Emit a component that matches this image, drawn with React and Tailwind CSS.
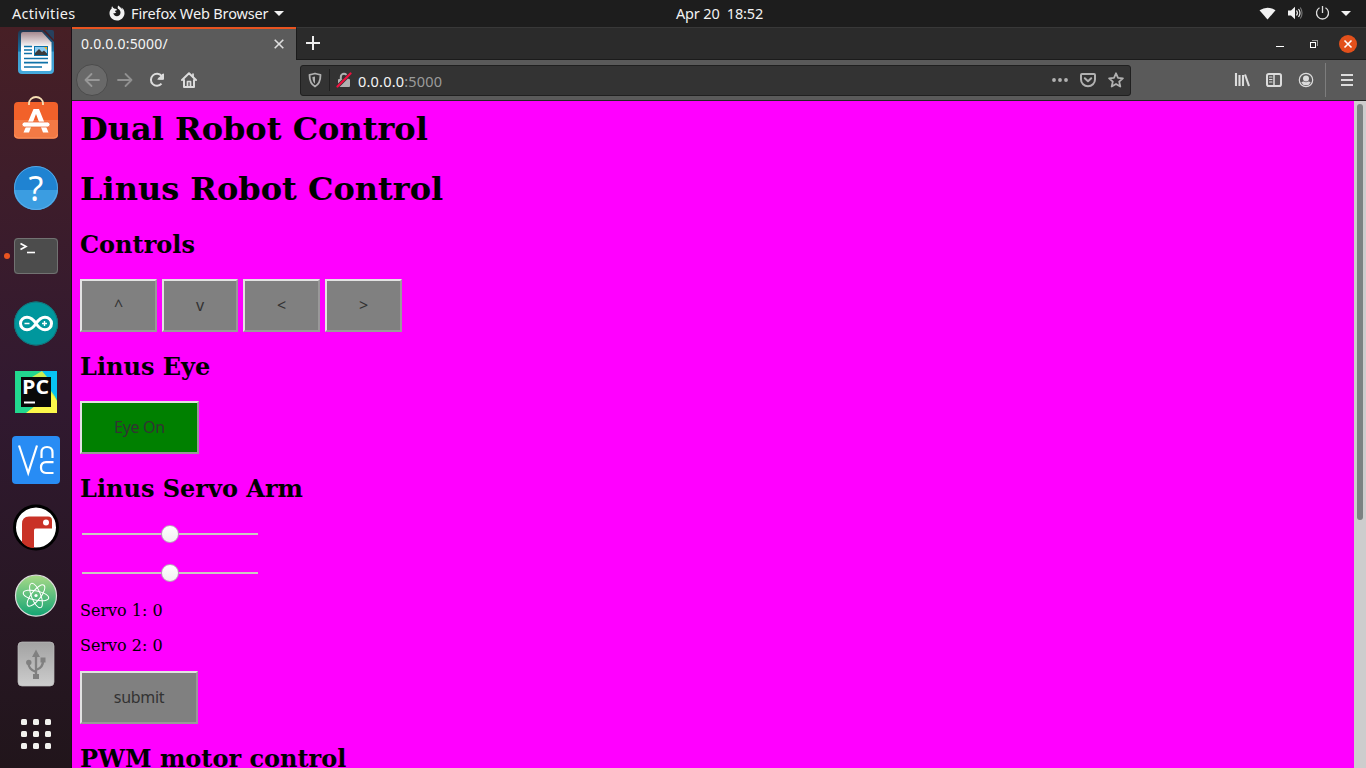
import React from "react";

const ui = "font-['Noto_Sans',sans-serif]";

function DockCell({ children, running }) {
  return (
    <div className="flex h-[68px] w-full shrink-0 items-center">
      <div className="flex w-3 justify-center pr-px pl-0.5">
        {running && <span className="size-1.5 rounded-full bg-[#e95420]" />}
      </div>
      <svg width="48" height="48" viewBox="0 0 48 48" className="block shrink-0">
        {children}
      </svg>
    </div>
  );
}

function Dock() {
  return (
    <nav className="flex w-[72px] shrink-0 flex-col overflow-hidden border-r border-[#1b0f17] bg-linear-to-b from-[#471f25] via-[#311930] via-50% to-[#21151b]">
      <div className="-mt-[9px] shrink-0">
        <DockCell>
          <defs>
            <linearGradient id="paper" x1="0" y1="0" x2="0" y2="1">
              <stop offset="0" stopColor="#a58a90" />
              <stop offset=".4" stopColor="#fff" />
            </linearGradient>
            <linearGradient id="frame" x1="0" y1="0" x2="0" y2="1">
              <stop offset="0" stopColor="#23354c" />
              <stop offset=".48" stopColor="#1672a6" />
              <stop offset=".5" stopColor="#3d9bcc" />
              <stop offset="1" stopColor="#45aadd" />
            </linearGradient>
          </defs>
          <path d="M10 2h20.5L42 14v28a4 4 0 0 1-4 4H10a4 4 0 0 1-4-4V6a4 4 0 0 1 4-4z" fill="url(#frame)" />
          <path d="M11 4h19L39.500 14.500V41a2 2 0 0 1-2 2H11a2 2 0 0 1-2-2V6a2 2 0 0 1 2-2z" fill="url(#paper)" />
          <path d="M33 2h7a2 2 0 0 1 2 2v8z" fill="#27415e" />
          <path d="M12 18.500h8M12 22h8M12 25.500h8M12 30.500h24M12 34.700h24M12 39h18" stroke="#0e72a8" strokeWidth="1.700" />
          <path d="M22 18h14v10H22z" fill="#0e72a8" />
          <path d="M23 19h12v8H23z" fill="#8ccbf0" />
          <path d="M32 19h3v3z" fill="#f5b21b" />
          <path d="M23 27v-2l4-4 3 3 2-1.500 3 3V27z" fill="#3b3b3b" />
        </DockCell>
      </div>
      <DockCell>
        <rect x="2" y="6" width="44" height="36.500" rx="4" fill="#f2612a" />
        <path d="M2 24h44v14.500a4 4 0 0 1-4 4H6a4 4 0 0 1-4-4z" fill="#f37a45" />
        <path d="M2.500 38.500a4 4 0 0 0 4 3.500h35a4 4 0 0 0 4-3.500" fill="none" stroke="#f8925f" />
        <path d="M17 9V7.500a7 6.500 0 0 1 14 0V9" fill="none" stroke="#f7dfb4" strokeWidth="1.800" />
        <path d="M21.500 13h5.500L36.500 36.500h-5.500L24 18 17 36.500h-5.500z" fill="#fff" />
        <rect x="10" y="26" width="28" height="5" rx="2.500" fill="#fff" stroke="#ee6a37" strokeWidth=".8" />
      </DockCell>
      <DockCell>
        <circle cx="24" cy="24" r="22" fill="#1f83d2" />
        <path d="M2 26a22 20 0 0 0 44 0z" fill="#3b9de1" />
        <circle cx="24" cy="24" r="21.500" fill="none" stroke="#63b0e8" strokeWidth=".8" />
        <text x="24" y="36.700" textAnchor="middle" fontFamily="Noto Sans" fontSize="34" fill="#fff">?</text>
      </DockCell>
      <DockCell running>
        <rect x="2" y="6" width="44" height="36" rx="3.500" fill="#4c4c4c" />
        <rect x="2.500" y="6.500" width="43" height="35" rx="3.500" fill="none" stroke="#727272" />
        <path d="M8.500 11.500l5.500 3-5.500 3" fill="none" stroke="#fff" strokeWidth="1.700" />
        <path d="M15 20.500h8" stroke="#fff" strokeWidth="1.600" />
      </DockCell>
      <DockCell>
        <circle cx="24" cy="23.500" r="22" fill="#00979d" />
        <circle cx="24" cy="23.500" r="21.500" fill="none" stroke="#137278" />
        <path d="M24 23.500C20.500 18 18 17.200 15 17.200a6.500 6.300 0 0 0 0 12.600C18 29.800 20.500 29 24 23.500S30 17.200 33 17.200a6.500 6.300 0 0 1 0 12.600C30 29.800 27.500 29 24 23.500z" fill="none" stroke="#fff" strokeWidth="3" />
        <path d="M12.500 23.500h5M30 23.500h5M32.500 21v5" stroke="#fff" strokeWidth="1.400" />
      </DockCell>
      <DockCell>
        <path d="M3 3h42v42H3z" fill="#22d88f" />
        <path d="M28 3h17v26L28 14z" fill="#07c3f2" />
        <path d="M20 9L30 3l5 6 10 24v12H20z" fill="#c8ee55" />
        <path d="M14 45l25-20 6 8v12z" fill="#fcf84a" />
        <path d="M34 3h11v28l-6-8z" fill="#07c3f2" />
        <path d="M3 30l20-12v27H3z" fill="#22d88f" />
        <path d="M14 45l9-7 8 7z" fill="#fcf84a" />
        <path d="M9 9h30v30H9z" fill="#090909" />
        <path d="M12 33.500h11v2H12z" fill="#fff" />
        <text x="10" y="26.300" textLength="27" lengthAdjust="spacingAndGlyphs" fontFamily="Open Sans" fontWeight="700" fontSize="19" fill="#fff">PC</text>
      </DockCell>
      <DockCell>
        <rect width="48" height="48" rx="4" fill="#288cf4" />
        <g fill="none" stroke="#fff" strokeWidth="2.200">
          <path d="M7 9.500L16.200 37 25 9.500" />
          <path d="M29.500 22v-5.500q0-5.500 5.500-5.500t5.500 5.500V22" />
          <path d="M41.500 26.200H34q-5 0-5 5.400t5 5.400h7.500" />
        </g>
      </DockCell>
      <DockCell>
        <circle cx="24" cy="23.500" r="21.500" fill="#fff" stroke="#000" strokeWidth="3" />
        <path d="M10 38.500V20q0-7.500 7-7.500h19q4 0 4 4v8H23.500q-1.500 0-1.500 2v17.500q-7 0-12-5.500z" fill="#c93227" />
        <circle cx="34" cy="18.500" r="3" fill="#fff" />
      </DockCell>
      <DockCell>
        <defs>
          <linearGradient id="atom" x1="0" y1="0" x2="0" y2="1">
            <stop offset="0" stopColor="#a8da87" />
            <stop offset="1" stopColor="#12a474" />
          </linearGradient>
        </defs>
        <circle cx="24" cy="23.700" r="20.500" fill="url(#atom)" stroke="#dcdcdc" strokeWidth="1.200" />
        <g fill="none" stroke="#fff" strokeWidth="1">
          <ellipse cx="24" cy="23.500" rx="13" ry="4.700" transform="rotate(12 24 23.500)" />
          <ellipse cx="24" cy="23.500" rx="13" ry="4.700" transform="rotate(69 24 23.500)" />
          <ellipse cx="24" cy="23.500" rx="13" ry="4.700" transform="rotate(128 24 23.500)" />
        </g>
        <circle cx="24" cy="23.500" r="1.600" fill="#fff" />
      </DockCell>
      <DockCell>
        <defs>
          <linearGradient id="drive" x1="0" y1="0" x2="0" y2="1">
            <stop offset="0" stopColor="#a2a2a2" />
            <stop offset="1" stopColor="#cdcdcd" />
          </linearGradient>
        </defs>
        <rect x="6" y="2" width="36" height="44" rx="4" fill="url(#drive)" stroke="#bdbdbd" strokeWidth=".7" />
        <path d="M24 14v22M24 32q-7.500-2.500-7.500-9M24 30q7.500-2.500 7-10" fill="none" stroke="#808080" strokeWidth="2.300" />
        <path d="M20 17L24 9.500l4 7.500zM28.500 17.500h5v5h-5zM21 34h6v5h-6z" fill="#808080" />
        <circle cx="16.800" cy="22.500" r="2.700" fill="#808080" />
      </DockCell>
      <div className="flex h-[72px] shrink-0 items-center pl-[21px]">
        <div className="grid grid-cols-3 gap-1.5">
          {Array.from({ length: 9 }, (_, i) => (
            <span key={i} className="size-1.5 rounded-[1.5px] bg-[#f2f1ee]" />
          ))}
        </div>
      </div>
    </nav>
  );
}

function TopBar() {
  return (
    <header className={`grid h-[27px] shrink-0 grid-cols-[1fr_auto_1fr] items-center bg-[#1d1d1d] text-[14.5px] leading-[26px] text-[#f2f2f2] ${ui}`}>
      <div className="flex items-center pb-px pl-3">
        <span className="w-[97px] tracking-[0.3px]">Activities</span>
        <svg width="16" height="16" viewBox="0 0 16 16" className="mr-[6px] block">
          <path d="M3.200 1.200C2.600 2 2.500 2.900 2.700 3.600 1.200 4.800.4 6.500.5 8.500.7 12.500 4 15.500 8 15.500s7.400-3.200 7.500-7.300c0-2.500-1-4.700-3-6 .7 1 1 1.800 1 2.600C12.500 3 10.500 1.800 9.500.5c-1 1-1 2.300-.5 3.200 1.700.8 2.600 2.200 2.500 4-.1 2-1.700 3.500-3.600 3.500-2 0-3.500-1.500-3.500-3.300 1 .7 2.200.4 3-.3-1-.3-1.500-1.200-1.200-1.800l2-.9c-.5-.9-1.500-1.200-2.600-1.200C4.500 3.200 3.600 2.300 3.200 1.200z" fill="#f2f2f2" />
        </svg>
        <span className="w-[138px] tracking-[-0.15px] whitespace-nowrap">Firefox Web Browser</span>
        <svg width="10" height="5" viewBox="0 0 10 5" className="ml-[5px] block"><path d="M0 0h10L5 5z" fill="#f2f2f2" /></svg>
      </div>
      <span className="pb-px pl-[73px] tracking-[-0.15px] whitespace-pre">Apr 20  18:52</span>
      <div className="flex items-center justify-end pr-[14px] pb-px">
        <svg width="93" height="18" viewBox="0 0 93 18" className="block">
          <path d="M0.500 6.300Q8.500 1.200 16.500 6.300L8.500 15.500z" fill="#f2f2f2" />
          <path d="M29 6.500h3l4-3.700v12.400l-4-3.700h-3z" fill="#f2f2f2" />
          <path d="M37.500 6.500q1.800 2.500 0 5M39.500 5q3 4 0 8" fill="none" stroke="#f2f2f2" strokeWidth="1.200" />
          <path d="M41.300 3.500q3.500 5.500 0 11" fill="none" stroke="#777" strokeWidth="1.100" />
          <path d="M60.500 3.800a6 6 0 1 0 6 0M63.500 2v7" fill="none" stroke="#ddd" strokeWidth="1.300" />
          <path d="M82 7h10L87 12z" fill="#f2f2f2" />
        </svg>
      </div>
    </header>
  );
}

function TabStrip() {
  return (
    <div className="flex h-[33px] shrink-0 bg-[#2b2b2b]">
      <div className={`flex w-[224px] items-center border-t-2 border-[#e95420] bg-[#5b5b5b] pl-[9px] text-[14px] text-[#f4f4f4] ${ui}`}>
        <span className="w-[193px] pb-[2px] leading-5 tracking-[0.2px]">0.0.0.0:5000/</span>
        <svg width="10" height="10" viewBox="0 0 10 10" className="mb-px block"><path d="M.7.700l8.600 8.600M9.300.7L.7 9.300" stroke="#dedede" strokeWidth="1.600" /></svg>
      </div>
      <div className="flex flex-1 items-center border-t border-b border-l border-t-[#383838] border-b-[#1b1b1b] border-l-[#1b1b1b] pr-[9px] pl-[9px]">
        <svg width="14" height="14" viewBox="0 0 14 14" className="mb-px block"><path d="M7 0v14M0 7h14" stroke="#ededed" strokeWidth="2" /></svg>
        <div className="ml-auto flex items-center">
          <svg width="8" height="10" viewBox="0 0 8 10" className="mr-[26px] block"><path d="M0 7.500h8" stroke="#fff" /></svg>
          <svg width="8" height="9" viewBox="0 0 8 9" className="mr-[21px] block" shapeRendering="crispEdges">
            <path d="M.5 3.500h5v5h-5z" fill="none" stroke="#fff" />
            <path d="M2 1.500h5.500V7" fill="none" stroke="#9a9a9a" />
          </svg>
          <svg width="18" height="18" viewBox="0 0 18 18" className="block">
            <circle cx="9" cy="9" r="9" fill="#e2501b" />
            <path d="M5.500 5.500l7 7M12.500 5.500l-7 7" stroke="#fff" strokeWidth="1.600" />
          </svg>
        </div>
      </div>
    </div>
  );
}

function Icon({ children, color = "#dcdcdc", className = "" }) {
  return (
    <svg width="16" height="16" viewBox="0 0 16 16" fill="none" stroke={color} strokeWidth="2" strokeLinecap="round" strokeLinejoin="round" className={`block shrink-0 ${className}`}>
      {children}
    </svg>
  );
}

function Toolbar() {
  return (
    <div className="flex h-[41px] shrink-0 items-center border-b border-[#252525] bg-[#5a5a5a] pr-[11px] pl-1">
      <div className="flex size-8 items-center justify-center rounded-full border border-[#4c4c4c] bg-[#696969]">
        <Icon color="#989898"><path d="M15 8H1.500M7.500 2l-6 6 6 6" strokeWidth="1.800" /></Icon>
      </div>
      <Icon color="#919191" className="ml-[9px]"><path d="M1 8h13.500M8.500 2l6 6-6 6" strokeWidth="1.800" /></Icon>
      <Icon className="ml-4"><path d="M12.500 11.700A6 6 0 1 1 12.600 4M14 2v4.800H9.300" strokeLinecap="butt" /><path d="M14.500 1v6.500H8z" fill="#dcdcdc" stroke="none" /></Icon>
      <Icon className="ml-4"><path d="M1 8l7-6.700L15 8M3 8v7h10V8" /><path d="M6.500 15V9.500h3V15M12 2v3" strokeWidth="1.700" /></Icon>

      <div className={`ml-[103px] flex h-[31px] w-[831px] items-center rounded-[3px] border border-[#202020] bg-[#333] pl-1.5 text-[14.5px] ${ui}`}>
        <Icon color="#b1b1b1"><path d="M8 1.500c2 .6 3.500 1 5.500 1.300 0 5.500-1.200 9.500-5.500 11.700-4.300-2.200-5.500-6.200-5.500-11.700C4.500 2.500 6 2.100 8 1.500z" strokeWidth="1.800" /><path d="M8 4.500v7.300C6.200 10.500 5.500 8.300 5.400 5.100z" fill="#b1b1b1" stroke="none" /></Icon>
        <span className="mx-[6px] h-[22px] w-px bg-[#202020]" />
        <Icon color="#b1b1b1"><path d="M4.800 7V5a3.200 3.200 0 0 1 6.400 0v2" /><rect x="2" y="7" width="12" height="8" rx="1" fill="#b1b1b1" stroke="none" /><path d="M1.500 14.500l13-13" stroke="#333" strokeWidth="3.500" strokeLinecap="butt" /><path d="M1.500 14.500l13-13" stroke="#f0103f" strokeWidth="2.200" /></Icon>
        <span className="ml-1.5 pt-px leading-5 tracking-[0.2px] text-[#f5f5f5]">0.0.0.0<span className="text-[#9b9b9b]">:5000</span></span>
        <div className="ml-auto flex gap-3 pr-1.5">
          <Icon color="#b1b1b1"><path d="M2 8h.01M8 8h.01M14 8h.01" strokeWidth="3.800" /></Icon>
          <Icon color="#b1b1b1"><path d="M2 2h12q1 0 1 1v4.500a7 6.700 0 0 1-14 0V3q0-1 1-1zM4.800 6.300L8 9.300l3.200-3" /></Icon>
          <Icon color="#b1b1b1"><path d="M8 1.300l2 4.500 4.900.5-3.700 3.300 1.100 4.900L8 12l-4.300 2.500 1.100-4.900L1.100 6.300 6 5.800z" strokeWidth="1.800" /></Icon>
        </div>
      </div>

      <div className="ml-auto flex items-center">
        <Icon><path d="M2 1v13M5.500 3v11M9 3v11M11 2.500l4 11.500" strokeLinecap="butt" strokeWidth="2.100" /></Icon>
        <Icon className="ml-4"><rect x="1" y="2" width="14" height="12" rx="1.800" /><path d="M8 2v12" strokeWidth="1.500" /><path d="M3.500 5h2.500M3.500 7.500h2.500M3.500 10h2.500" strokeWidth="1.100" /></Icon>
        <Icon className="ml-4"><circle cx="8" cy="8" r="6.700" strokeWidth="1.200" /><circle cx="8" cy="6.500" r="3" fill="#dcdcdc" stroke="none" /><path d="M3.300 10.500q1.500-1.300 2.500-1 2.200 1.300 4.400 0 1-.3 2.500 1a5.300 5.300 0 0 1-9.400 0z" fill="#dcdcdc" stroke="none" /></Icon>
        <span className="ml-[11px] h-[34px] w-px bg-[#7d7d7d]" />
        <Icon className="ml-[13px]"><path d="M2 3h12M2 8h12M2 13h12" strokeLinecap="butt" /></Icon>
      </div>
    </div>
  );
}

function PadButton({ children, className }) {
  return (
    <button className={`flex h-[53px] items-center justify-center border-2 border-t-[#e2e2e2] border-r-[#999] border-b-[#999] border-l-[#e2e2e2] pb-0.5 text-[#333] ${ui} ${className}`}>
      {children}
    </button>
  );
}

function Slider() {
  return (
    <div className="ml-0.5 flex h-[18px] w-[176px] items-center">
      <div className="h-0.5 flex-1 bg-[#cdc7c2]" />
      <div className="size-[18px] rounded-full border border-[#b9a4b9] bg-linear-to-b from-white to-[#f1f1f1]" />
      <div className="h-0.5 flex-1 bg-[#cdc7c2]" />
    </div>
  );
}

function Page() {
  return (
    <main className="flex-1 overflow-hidden bg-[#ff00ff] pt-[9px] pl-2 font-['DejaVu_Serif',serif] text-base text-black">
      <h1 className="h-[38px] text-[32px] leading-[38px] font-bold">Dual Robot Control</h1>
      <h1 className="mt-[22px] h-[38px] text-[32px] leading-[38px] font-bold">Linus Robot Control</h1>
      <h2 className="mt-[23px] h-7 text-2xl leading-7 font-bold">Controls</h2>
      <div className="mt-5 flex gap-[5px]">
        <PadButton className="w-[77px] bg-[#808080] text-[16px]">^</PadButton>
        <PadButton className="w-[76px] bg-[#808080] text-[16px]">v</PadButton>
        <PadButton className="w-[77px] bg-[#808080] text-[16px]">&lt;</PadButton>
        <PadButton className="w-[77px] bg-[#808080] text-[16px]">&gt;</PadButton>
      </div>
      <h2 className="mt-[21px] h-7 text-2xl leading-7 font-bold">Linus Eye</h2>
      <PadButton className="mt-5 w-[119px] bg-[#008000] text-[16px] tracking-[-0.3px]">Eye On</PadButton>
      <h2 className="mt-[21px] h-7 text-2xl leading-7 font-bold">Linus Servo Arm</h2>
      <div className="mt-[22px] flex flex-col gap-[21px]">
        <Slider />
        <Slider />
      </div>
      <p className="mt-[19px] h-[19px] leading-[19px]">Servo 1: 0</p>
      <p className="mt-4 h-[19px] leading-[19px]">Servo 2: 0</p>
      <PadButton className="mt-4 w-[118px] bg-[#808080] text-[16px] tracking-[-0.3px]">submit</PadButton>
      <h2 className="mt-[21px] h-7 text-2xl leading-7 font-bold">PWM motor control</h2>
    </main>
  );
}

export default function App() {
  return (
    <div className="flex h-[768px] w-[1366px] flex-col overflow-hidden">
      <TopBar />
      <div className="flex min-h-0 flex-1">
        <Dock />
        <div className="flex min-w-0 flex-1 flex-col">
          <TabStrip />
          <Toolbar />
          <div className="flex min-h-0 flex-1">
            <Page />
            <div className="w-3 shrink-0 bg-[#cdcdcd] px-[3px] pt-[3px]">
              <div className="h-[416px] rounded-full bg-[#7c8282]" />
            </div>
          </div>
        </div>
      </div>
    </div>
  );
}
